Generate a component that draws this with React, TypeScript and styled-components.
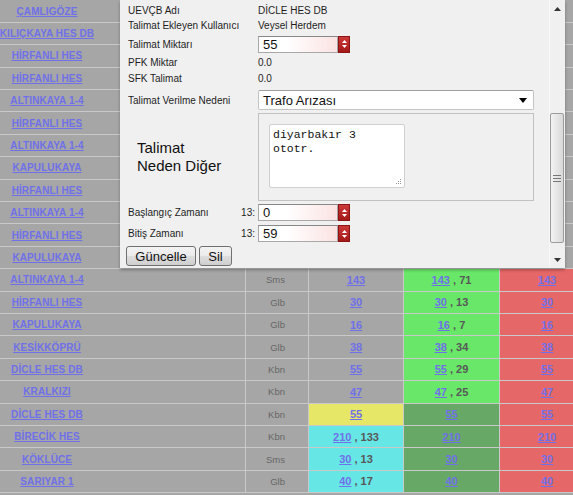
import React from 'react';
import styled, { createGlobalStyle } from 'styled-components';

const GlobalStyle = createGlobalStyle`
    html, body {
        margin: 0;
        padding: 0;
        overflow: hidden;
        background: #a6a6a6;
    }
    body {
        font-family: "Liberation Sans", Arial, sans-serif;
    }
`;

const SPage = styled.div`
    position: relative;
    width: 573px;
    height: 495px;
    overflow: hidden;
`;

const STable = styled.div`
    width: 600px;
    padding-top: 0.5px;
`;

const SRow = styled.div`
    display: grid;
    grid-template-columns: 94px 152px 63px 95px 96px 95px;
    height: 22.4px;
`;

const SCell = styled.div<{ $bg?: string; $line?: boolean; $right?: boolean }>`
    box-sizing: border-box;
    display: flex;
    align-items: center;
    justify-content: ${({ $right }) => ($right ? 'flex-end' : 'center')};
    padding-right: ${({ $right }) => ($right ? '23px' : '0')};
    background: ${({ $bg }) => $bg ?? '#a6a6a6'};
    border-bottom: 1px solid #c9c9c9;
    border-right: ${({ $line }) => ($line ? '1px solid #c9c9c9' : 'none')};
    white-space: nowrap;
`;

const SNameLink = styled.a`
    font-size: 10px;
    font-weight: bold;
    letter-spacing: 0.1px;
    color: #7070e8;
    text-decoration: underline;
    cursor: pointer;
`;

const SUnit = styled.span`
    font-family: "Liberation Sans", Arial, sans-serif;
    font-size: 9.5px;
    color: #666;
`;

const SNumLink = styled.a`
    font-size: 11px;
    font-weight: bold;
    color: #7070e8;
    text-decoration: underline;
    cursor: pointer;
`;

const SExtra = styled.span`
    font-size: 11px;
    font-weight: bold;
    color: #585858;
    white-space: pre;
`;

/* modal */

const SModal = styled.div`
    position: absolute;
    left: 120px;
    top: 0;
    width: 445px;
    height: 268px;
    display: flex;
    background: #f0f0f0;
    box-shadow: 0 2px 3px rgba(0, 0, 0, 0.3);
`;

const SForm = styled.div`
    flex: 1;
    padding: 3px 0 0 8px;
    font-size: 10px;
    color: #1e1e1e;
`;

const SFormRow = styled.div<{ $h: number }>`
    display: grid;
    grid-template-columns: 130px 1fr;
    align-items: center;
    height: ${({ $h }) => $h}px;
`;

const STimeLabel = styled.div`
    display: flex;
    justify-content: space-between;
    padding-right: 3px;
`;

const SBigLabel = styled.div`
    padding-left: 9px;
    font-size: 15px;
    line-height: 18px;
    color: #111;
`;

const SNumberBox = styled.div`
    display: flex;
    width: 92px;
    height: 17px;
`;

const SInput = styled.div`
    box-sizing: border-box;
    flex: 1;
    height: 17px;
    padding-left: 4px;
    font-size: 13px;
    line-height: 15px;
    color: #111;
    background: linear-gradient(to right, #ffffff 35%, #fbe2e2);
    border: 1px solid #a8a8a8;
    border-top-color: #888;
`;

const SSpinner = styled.div`
    box-sizing: border-box;
    width: 12px;
    height: 17px;
    display: flex;
    flex-direction: column;
    align-items: center;
    justify-content: center;
    gap: 2px;
    background: linear-gradient(#cc3a3a, #a51818);
    border: 1px solid #8c1414;
`;

const SSelect = styled.div`
    box-sizing: border-box;
    display: flex;
    align-items: center;
    justify-content: space-between;
    width: 276px;
    height: 20px;
    padding: 0 4px 0 4px;
    font-size: 13px;
    color: #111;
    background: #fff;
    border: 1px solid #c4c4c4;
    border-top-color: #a0a0a0;
    border-radius: 2px;
`;

const SFieldset = styled.div`
    box-sizing: border-box;
    width: 276px;
    height: 88px;
    padding: 10px 0 0 10px;
    border: 1px solid #c2c2c2;
`;

const STextWrap = styled.div`
    position: relative;
    width: 136px;
    height: 64px;
`;

const STextarea = styled.textarea`
    box-sizing: border-box;
    width: 136px;
    height: 64px;
    margin: 0;
    padding: 3px 3px;
    resize: none;
    font-family: "Liberation Mono", "Courier New", monospace;
    font-size: 11.5px;
    line-height: 14px;
    color: #111;
    background: #fff;
    border: 1px solid #d0d0d0;
    border-radius: 2px;
    outline: none;
`;

const SGrip = styled.svg`
    position: absolute;
    right: 3px;
    bottom: 3px;
`;

const SButtonRow = styled.div`
    display: flex;
    gap: 3px;
    height: 25px;
    padding-top: 3px;
    box-sizing: border-box;
    margin-left: -2px;
`;

const SButton = styled.button<{ $w: number }>`
    box-sizing: border-box;
    width: ${({ $w }) => $w}px;
    height: 20px;
    padding: 0;
    font-family: "Liberation Sans", Arial, sans-serif;
    font-size: 13px;
    color: #111;
    border: 1px solid #707070;
    border-radius: 3px;
    background: linear-gradient(#f3f3f3 0%, #ebebeb 48%, #dddddd 52%, #cfcfcf 100%);
`;

const SScrollbar = styled.div`
    width: 16px;
    display: flex;
    flex-direction: column;
    background: #f0f0f0;
    border-left: 1px solid #f8f8f8;
    box-sizing: border-box;
`;

const SScrollArrow = styled.div`
    height: 17px;
    display: flex;
    align-items: center;
    justify-content: center;
`;

const STrack = styled.div`
    flex: 1;
`;

const SThumb = styled.div`
    box-sizing: border-box;
    width: 14px;
    height: 130px;
    margin-top: 96px;
    display: flex;
    align-items: center;
    justify-content: center;
    border: 1px solid #9c9c9c;
    border-radius: 2px;
    background: linear-gradient(to right, #f3f3f3, #d8d8d8);
`;

type TRow = {
    name: string;
    unit?: string;
    a?: [string, string?, string?];
    b?: [string, string?, string?];
    c?: [string, string?, string?];
};

const GREY = '#a6a6a6';
const GREEN = '#69e769';
const RED = '#e66767';
const YELLOW = '#e6e667';
const CYAN = '#67e6e6';
const DKGREEN = '#67a867';

const rows: TRow[] = [
    { name: 'ÇAMLIGÖZE' },
    { name: 'KILIÇKAYA HES DB' },
    { name: 'HİRFANLI HES' },
    { name: 'HİRFANLI HES' },
    { name: 'ALTINKAYA 1-4' },
    { name: 'HİRFANLI HES' },
    { name: 'ALTINKAYA 1-4' },
    { name: 'KAPULUKAYA' },
    { name: 'HİRFANLI HES' },
    { name: 'ALTINKAYA 1-4' },
    { name: 'HİRFANLI HES' },
    { name: 'KAPULUKAYA' },
    { name: 'ALTINKAYA 1-4', unit: 'Sms', a: ['143'], b: ['143', '71', GREEN], c: ['143', undefined, RED] },
    { name: 'HİRFANLI HES', unit: 'Glb', a: ['30'], b: ['30', '13', GREEN], c: ['30', undefined, RED] },
    { name: 'KAPULUKAYA', unit: 'Glb', a: ['16'], b: ['16', '7', GREEN], c: ['16', undefined, RED] },
    { name: 'KESİKKÖPRÜ', unit: 'Glb', a: ['38'], b: ['38', '34', GREEN], c: ['38', undefined, RED] },
    { name: 'DİCLE HES DB', unit: 'Kbn', a: ['55'], b: ['55', '29', GREEN], c: ['55', undefined, RED] },
    { name: 'KRALKIZI', unit: 'Kbn', a: ['47'], b: ['47', '25', GREEN], c: ['47', undefined, RED] },
    { name: 'DİCLE HES DB', unit: 'Kbn', a: ['55', undefined, YELLOW], b: ['55', undefined, DKGREEN], c: ['55', undefined, RED] },
    { name: 'BİRECİK HES', unit: 'Kbn', a: ['210', '133', CYAN], b: ['210', undefined, DKGREEN], c: ['210', undefined, RED] },
    { name: 'KÖKLÜCE', unit: 'Sms', a: ['30', '13', CYAN], b: ['30', undefined, DKGREEN], c: ['30', undefined, RED] },
    { name: 'SARIYAR 1', unit: 'Glb', a: ['40', '17', CYAN], b: ['40', undefined, DKGREEN], c: ['40', undefined, RED] },
];

const ValueCell = ({ v }: { v?: [string, string?, string?] }) => (
    <SCell $line $bg={v?.[2] ?? GREY}>
        {v && <SNumLink>{v[0]}</SNumLink>}
        {v?.[1] && <SExtra>{` , ${v[1]}`}</SExtra>}
    </SCell>
);

const Spinner = () => (
    <SSpinner>
        <svg width="5" height="3" viewBox="0 0 5 3">
            <path d="M0 3 L2.5 0 L5 3 Z" fill="#fff" />
        </svg>
        <svg width="5" height="3" viewBox="0 0 5 3">
            <path d="M0 0 L2.5 3 L5 0 Z" fill="#fff" />
        </svg>
    </SSpinner>
);

const NumberField = ({ value }: { value: string }) => (
    <SNumberBox>
        <SInput>{value}</SInput>
        <Spinner />
    </SNumberBox>
);

const Modal = () => (
    <SModal>
        <SForm>
            <SFormRow $h={14}>
                <div>UEVÇB Adı</div>
                <div>DİCLE HES DB</div>
            </SFormRow>
            <SFormRow $h={16}>
                <div>Talimat Ekleyen Kullanıcı</div>
                <div>Veysel Herdem</div>
            </SFormRow>
            <SFormRow $h={22}>
                <div>Talimat Miktarı</div>
                <NumberField value="55" />
            </SFormRow>
            <SFormRow $h={15}>
                <div>PFK Miktar</div>
                <div>0.0</div>
            </SFormRow>
            <SFormRow $h={17}>
                <div>SFK Talimat</div>
                <div>0.0</div>
            </SFormRow>
            <SFormRow $h={26}>
                <div>Talimat Verilme Nedeni</div>
                <SSelect>
                    <span>Trafo Arızası</span>
                    <svg width="8" height="5" viewBox="0 0 8 5" style={{ marginRight: 2 }}>
                        <path d="M0 0 H8 L4 5 Z" fill="#000" />
                    </svg>
                </SSelect>
            </SFormRow>
            <SFormRow $h={88}>
                <SBigLabel>
                    Talimat
                    <br />
                    Neden Diğer
                </SBigLabel>
                <SFieldset>
                    <STextWrap>
                        <STextarea readOnly defaultValue={'diyarbakır 3\nototr.'} />
                        <SGrip width="6" height="6" viewBox="0 0 6 6">
                            <rect x="4" y="0" width="1" height="1" fill="#999" />
                            <rect x="2" y="2" width="1" height="1" fill="#999" />
                            <rect x="4" y="2" width="1" height="1" fill="#999" />
                            <rect x="0" y="4" width="1" height="1" fill="#999" />
                            <rect x="2" y="4" width="1" height="1" fill="#999" />
                            <rect x="4" y="4" width="1" height="1" fill="#999" />
                        </SGrip>
                    </STextWrap>
                </SFieldset>
            </SFormRow>
            <SFormRow $h={23}>
                <STimeLabel>
                    <span>Başlangıç Zamanı</span>
                    <span>13:</span>
                </STimeLabel>
                <NumberField value="0" />
            </SFormRow>
            <SFormRow $h={19}>
                <STimeLabel>
                    <span>Bitiş Zamanı</span>
                    <span>13:</span>
                </STimeLabel>
                <NumberField value="59" />
            </SFormRow>
            <SButtonRow>
                <SButton $w={70}>Güncelle</SButton>
                <SButton $w={33}>Sil</SButton>
            </SButtonRow>
        </SForm>
        <SScrollbar>
            <SScrollArrow>
                <svg width="7" height="4" viewBox="0 0 7 4">
                    <path d="M0 4 L3.5 0 L7 4 Z" fill="#333" />
                </svg>
            </SScrollArrow>
            <STrack>
                <SThumb>
                    <svg width="8" height="7" viewBox="0 0 8 7">
                        <rect x="0" y="0" width="8" height="1" fill="#777" />
                        <rect x="0" y="3" width="8" height="1" fill="#777" />
                        <rect x="0" y="6" width="8" height="1" fill="#777" />
                    </svg>
                </SThumb>
            </STrack>
            <SScrollArrow>
                <svg width="7" height="4" viewBox="0 0 7 4">
                    <path d="M0 0 H7 L3.5 4 Z" fill="#333" />
                </svg>
            </SScrollArrow>
        </SScrollbar>
    </SModal>
);

const App = () => {
    return (
        <SPage>
            <GlobalStyle />
            <STable>
                {rows.map((r, i) => (
                    <SRow key={i}>
                        <SCell>
                            <SNameLink>{r.name}</SNameLink>
                        </SCell>
                        <SCell $line />
                        <SCell $line $right>
                            {r.unit && <SUnit>{r.unit}</SUnit>}
                        </SCell>
                        <ValueCell v={r.a} />
                        <ValueCell v={r.b} />
                        <ValueCell v={r.c} />
                    </SRow>
                ))}
            </STable>
            <Modal />
        </SPage>
    );
};

export default App;
